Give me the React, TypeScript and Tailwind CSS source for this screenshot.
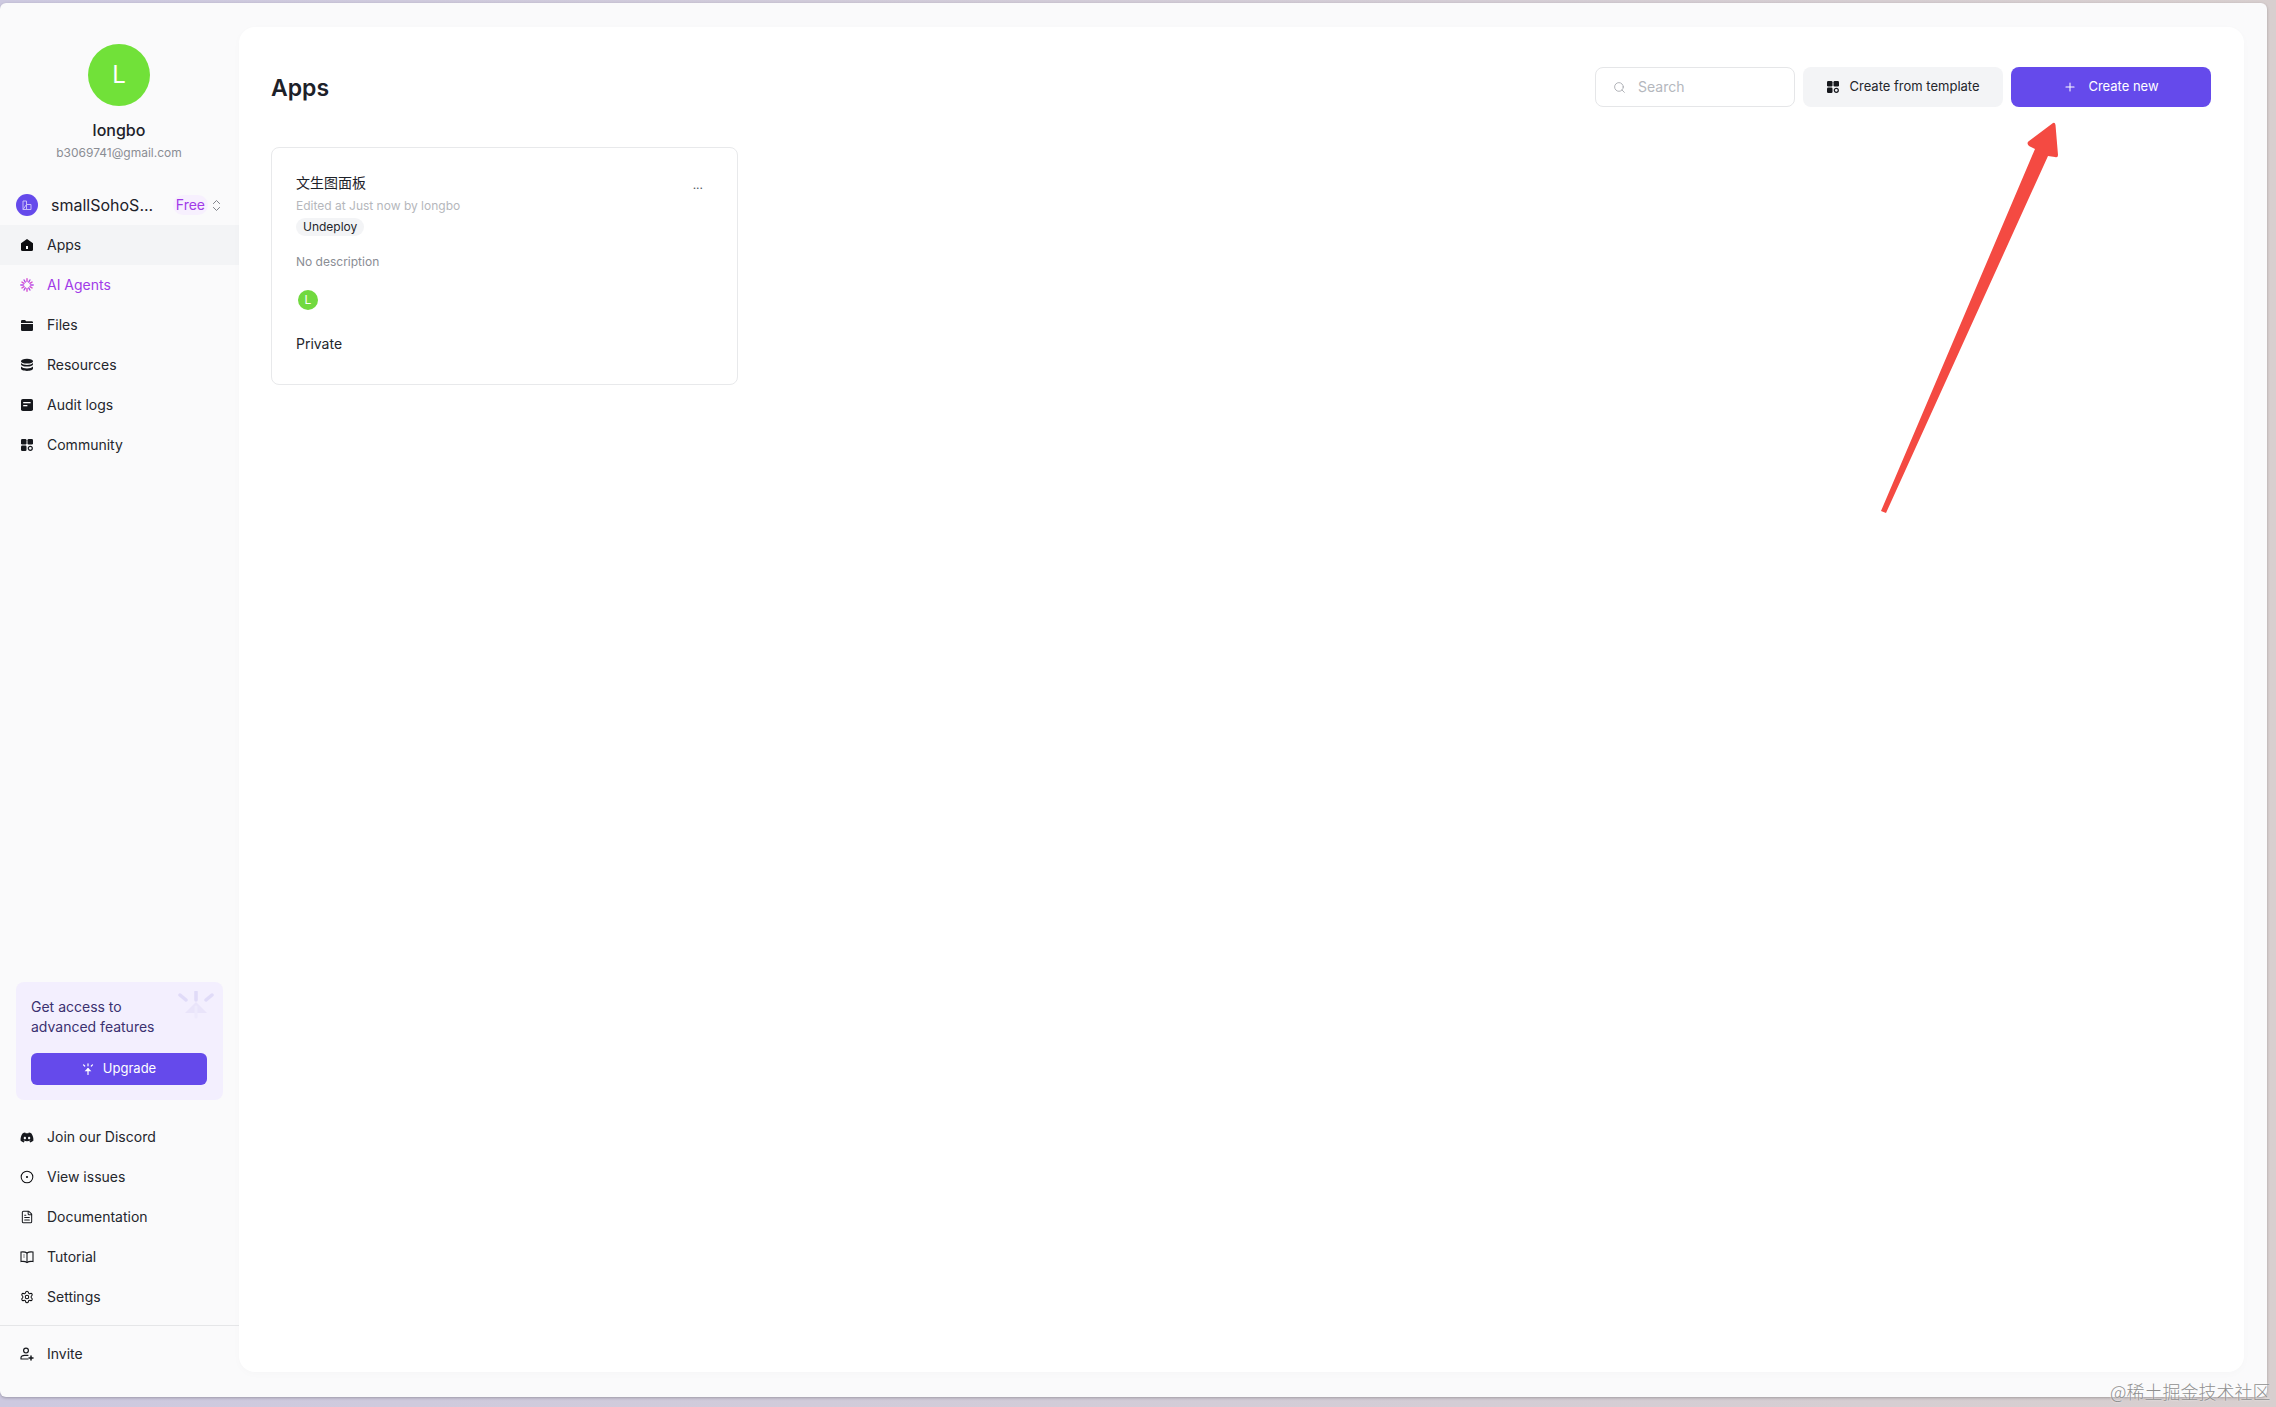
import React from "react";
import { CircleDot, FileText, Search, Plus, ChevronsUpDown, Settings } from "lucide-react";
import { FaDiscord } from "react-icons/fa";

const Home = () => (
  <svg width="14" height="14" viewBox="0 0 14 14"><path d="M7 1 L13 5.200 V11.500 A1.500 1.500 0 0 1 11.500 13 H2.500 A1.500 1.500 0 0 1 1 11.500 V5.200 Z" fill="#0c0d10" /><rect x="6" y="8" width="2" height="3" fill="#fff" /></svg>
);
const spokes = [0, 30, 60, 90, 120, 150, 180, 210, 240, 270, 300, 330];
const Spark = () => (
  <svg width="14" height="14" viewBox="0 0 14 14" fill="none" strokeLinecap="round" strokeWidth="1.400">
    {spokes.map((a, i) => (
      <line key={a} x1="7" y1="3.600" x2="7" y2={i % 3 === 0 ? 0.8 : 1.2} stroke={i % 2 === 0 ? "#d64fd0" : "#b04be8"} transform={`rotate(${a} 7 7)`} />
    ))}
  </svg>
);
const Folder = () => (
  <svg width="14" height="14" viewBox="0 0 14 14" fill="#16181d"><path d="M1 3.200A1.200 1.200 0 0 1 2.200 2H5l1.200 1.300H11.800A1.200 1.200 0 0 1 13 4.500V5H1Z" /><path d="M1 6h12v5.800A1.200 1.200 0 0 1 11.800 13H2.200A1.200 1.200 0 0 1 1 11.800Z" /></svg>
);
const Stack = () => (
  <svg width="14" height="14" viewBox="0 0 14 14" fill="#16181d"><ellipse cx="7" cy="3.200" rx="6" ry="2.400" /><path d="M1 5v1.200C1 7.500 3.700 8.600 7 8.600s6-1.100 6-2.400V5c-1 1.300-3.400 2-6 2S2 6.300 1 5Z" /><path d="M1 8.400v2.200C1 12 3.700 13 7 13s6-1 6-2.400V8.400c-1 1.300-3.400 2-6 2s-5-.7-6-2Z" /></svg>
);
const Log = () => (
  <svg width="14" height="14" viewBox="0 0 14 14"><rect x="1" y="1" width="12" height="12" rx="1.800" fill="#16181d" /><rect x="3.200" y="4" width="7.400" height="1.300" fill="#fff" /><rect x="3.200" y="7" width="4.200" height="1.300" fill="#fff" /></svg>
);
const Community = ({ s = 14 }: { s?: number }) => (
  <svg width={s} height={s} viewBox="0 0 14 14" fill="#16181d"><rect x="1" y="1" width="5.500" height="5.500" rx="1.200" /><rect x="7.500" y="1" width="5.500" height="5.500" rx="1.200" /><rect x="1" y="7.500" width="5.500" height="5.500" rx="1.200" /><circle cx="10.300" cy="10.300" r="2" fill="none" stroke="#16181d" strokeWidth="1.200" /></svg>
);
const Book = () => (
  <svg width="14" height="14" viewBox="0 0 14 14" fill="none" stroke="#16181d" strokeWidth="1.100"><path d="M7 3 C5.500 1.900 3 1.700 1 2v9.500c2-.3 4.500-.1 6 1 1.500-1.100 4-1.300 6-1V2c-2-.3-4.500-.1-6 1Z" /><path d="M7 3v9.500M3.500 5h1M3.500 7h1" /></svg>
);
const Invite = () => (
  <svg width="14" height="14" viewBox="0 0 14 14" fill="none" stroke="#16181d" strokeWidth="1.200" strokeLinecap="round"><circle cx="6" cy="3.600" r="2.400" /><path d="M1 12v-1.200C1 9.300 2.500 8.300 4.500 8.300H8M1 12h7" /><path d="M11 9v4M9 11h4" strokeWidth="1.500" /></svg>
);
const Burst = ({ c = "#fff", s = 12 }: { c?: string; s?: number }) => (
  <svg width={s} height={s} viewBox="0 0 12 12" fill="none" stroke={c} strokeWidth="1.200" strokeLinecap="round"><path d="M6 .8v2M1.500 1.800l1.200 1.200M10.500 1.800 9.300 3M6 5.500v6" /><path d="M6 4.800 2.600 8.200h6.800Z" fill={c} stroke="none" /></svg>
);

const Row = ({ icon, label, active, purple }: { icon: React.ReactNode; label: string; active?: boolean; purple?: boolean }) => (
  <div className={`flex h-10 items-center gap-[13px] pl-[20px] text-sm ${active ? "bg-[#f3f4f6]" : ""} ${purple ? "text-[#a13be8]" : "text-[#24262c]"}`}>
    <span className="flex w-[14px] items-center justify-center">{icon}</span>
    <span>{label}</span>
  </div>
);

export default function App() {
  return (
    <div className="relative h-[1407px] w-[2276px] overflow-hidden bg-[linear-gradient(to_right,#cdc9e0,#d8cfcf)] pt-[3px] font-['Inter','Noto_Sans_CJK_SC',sans-serif]">
      <div className="flex h-[1394px] w-[2267px] rounded-[6px] bg-[#fafafb] shadow-[0_1px_3px_rgba(0,0,0,0.25)]">
        <aside className="flex w-[239px] shrink-0 flex-col">
          <div className="flex flex-col items-center pr-[1px] pt-[41px]">
            <div className="flex h-[62px] w-[62px] items-center justify-center rounded-full bg-[#71e139] text-[24px] text-white">L</div>
            <div className="mt-3 text-base font-medium leading-6 text-[#1d2129]">longbo</div>
            <div className="mt-[3px] text-xs leading-4 text-[#8a8d94]">b3069741@gmail.com</div>
          </div>
          <div className="mt-[24px] flex h-10 items-center pl-4 pr-[15px]">
            <div className="flex h-[22px] w-[22px] items-center justify-center rounded-full bg-[#654aeb]">
              <svg width="12" height="12" viewBox="0 0 12 12" fill="none" stroke="#c9bdf8" strokeWidth="1"><path d="M2 10.500V2h3.500v8.500M5.500 5.500H10v5H2Z" /></svg>
            </div>
            <span className="ml-[13px] text-base leading-6 text-[#1d2129]">smallSohoS...</span>
            <span className="ml-auto rounded-full bg-[#f7f0fe] px-[3px] text-sm text-[#a13be8]">Free</span>
            <ChevronsUpDown size={15} strokeWidth={1.5} className="ml-[1px] text-[#787b82]" />
          </div>
          <nav>
            <Row icon={<Home />} label="Apps" active />
            <Row icon={<Spark />} label="AI Agents" purple />
            <Row icon={<Folder />} label="Files" />
            <Row icon={<Stack />} label="Resources" />
            <Row icon={<Log />} label="Audit logs" />
            <Row icon={<Community />} label="Community" />
          </nav>
          <div className="relative mx-4 mt-auto h-[118px] rounded-[8px] bg-[#f3effe] px-[15px] pt-[15px]">
            <div className="absolute right-[8px] top-[9px] opacity-60">
              <svg width="38" height="28" viewBox="0 0 38 28" fill="none" strokeLinecap="round">
                <path d="M19 1v8M3 4l6 5M35 4l-6 5" stroke="#d5cef5" strokeWidth="3.500" />
                <path d="M19 11 8 22h22Z" fill="#e3def9" />
                <path d="M19 16v10" stroke="#ece8fc" strokeWidth="3" />
              </svg>
            </div>
            <div className="text-sm leading-5 text-[#3b3170]">Get access to<br />advanced features</div>
            <button className="mt-[16px] flex h-8 w-[176px] items-center justify-center gap-[9px] rounded-[6px] bg-[#654aeb] text-[13px] text-white">
              <Burst />
              Upgrade
            </button>
          </div>
          <div className="mt-[17px]">
            <Row icon={<FaDiscord size={15} color="#16181d" />} label="Join our Discord" />
            <Row icon={<CircleDot size={14} strokeWidth={1.75} color="#0c0d10" />} label="View issues" />
            <Row icon={<FileText size={14} strokeWidth={1.75} color="#16181d" />} label="Documentation" />
            <Row icon={<Book />} label="Tutorial" />
            <Row icon={<Settings size={14} strokeWidth={1.75} color="#0c0d10" />} label="Settings" />
          </div>
          <div className="mt-2 border-t border-[#e5e6e8]" />
          <div className="mb-[23px] mt-[8px]">
            <Row icon={<Invite />} label="Invite" />
          </div>
        </aside>
        <main className="mb-[25px] mr-[23px] mt-[24px] flex-1 rounded-[16px] bg-white pl-[32px] pr-[33px] pt-[40px] shadow-[0_2px_8px_rgba(0,0,0,0.02)]">
          <header className="flex h-10 items-center">
            <h1 className="pt-[2px] text-[23px] font-semibold text-[#1d2129]">Apps</h1>
            <div className="ml-auto flex gap-2">
              <div className="flex h-10 w-[200px] items-center gap-[12px] rounded-[8px] border border-[#e5e6e8] pl-[17px] text-sm text-[#b4b7bd]">
                <Search size={13} strokeWidth={1.5} className="text-[#a0a3a9]" />
                Search
              </div>
              <button className="flex h-10 w-[200px] items-center justify-center gap-[9px] rounded-[8px] bg-[#f3f4f6] text-[13px] text-[#24262c]">
                <Community />
                Create from template
              </button>
              <button className="flex h-10 w-[200px] items-center justify-center gap-[11px] rounded-[8px] bg-[#654aeb] text-[13px] text-white">
                <Plus size={14} strokeWidth={1.75} />
                Create new
              </button>
            </div>
          </header>
          <article className="mt-10 h-[238px] w-[467px] rounded-[8px] border border-[#e8e9eb] px-[24px] pt-[24px]">
            <div className="flex h-[22px] items-start justify-between">
              <div className="text-sm leading-[22px] text-[#1d2129]">文生图面板</div>
              <div className="mr-[10px] mt-[2px] text-xs leading-[22px] text-[#55585f]">...</div>
            </div>
            <div className="mt-[4px] text-xs leading-4 text-[#b5b7bc]">Edited at Just now by longbo</div>
            <div className="mt-[4px] flex h-[18px] w-fit items-center rounded-full bg-[#f3f4f6] px-[7px] text-xs text-[#24262c]">Undeploy</div>
            <div className="mt-[18px] text-xs leading-4 text-[#8a8d94]">No description</div>
            <div className="ml-[2px] mt-[20px] flex h-5 w-5 items-center justify-center rounded-full bg-[#71d93f] text-xs text-white">L</div>
            <div className="mt-[23px] text-sm leading-[22px] text-[#24262c]">Private</div>
          </article>
        </main>
      </div>
      <svg className="absolute left-[1875px] top-[118px]" width="190" height="400" viewBox="1875 118 190 400">
        <path d="M2053 123 Q2055 122 2055.500 125 L2058 155 Q2058 158 2055 157 L2048 156 L1886 513 L1881 511 L2035 149 L2029 146 Q2026 143 2029 141 Z" fill="#f44a42" />
      </svg>
      <div className="absolute left-[2110px] top-[1380px] font-['Noto_Sans_CJK_SC',sans-serif] text-[18px] font-light leading-[22px] text-[#8f8f8f] [text-shadow:0_0_2px_#fff]">@稀土掘金技术社区</div>
    </div>
  );
}
